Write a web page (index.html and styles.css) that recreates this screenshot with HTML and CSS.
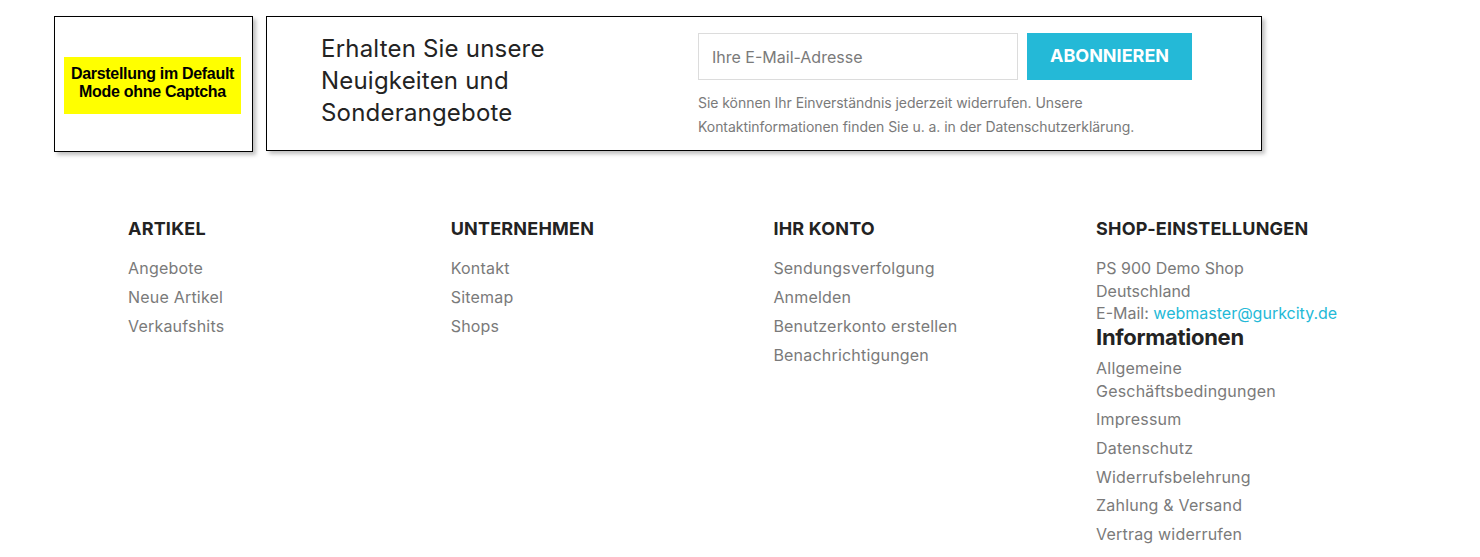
FILE: index.html
```html
<!DOCTYPE html>
<html lang="de">
<head>
<meta charset="utf-8">
<title>Footer</title>
<link rel="stylesheet" href="styles.css">
</head>
<body>
<div class="top-row">
  <div class="note-box">
    <div class="note">Darstellung im Default Mode ohne Captcha</div>
  </div>
  <div class="newsletter">
    <h2 class="nl-title">Erhalten Sie unsere Neuigkeiten und Sonderangebote</h2>
    <div class="nl-form">
      <div class="nl-row">
        <div class="nl-input">Ihre E-Mail-Adresse</div>
        <div class="nl-btn">ABONNIEREN</div>
      </div>
      <p class="nl-info">Sie können Ihr Einverständnis jederzeit widerrufen. Unsere Kontaktinformationen finden Sie u. a. in der Datenschutzerklärung.</p>
    </div>
  </div>
</div>

<div class="footer">
  <div class="col">
    <h3 class="col-title">ARTIKEL</h3>
    <ul class="links">
      <li>Angebote</li>
      <li>Neue Artikel</li>
      <li>Verkaufshits</li>
    </ul>
  </div>
  <div class="col">
    <h3 class="col-title">UNTERNEHMEN</h3>
    <ul class="links">
      <li>Kontakt</li>
      <li>Sitemap</li>
      <li>Shops</li>
    </ul>
  </div>
  <div class="col">
    <h3 class="col-title">IHR KONTO</h3>
    <ul class="links">
      <li>Sendungsverfolgung</li>
      <li>Anmelden</li>
      <li>Benutzerkonto erstellen</li>
      <li>Benachrichtigungen</li>
    </ul>
  </div>
  <div class="col col-shop">
    <h3 class="col-title">SHOP-EINSTELLUNGEN</h3>
    <div class="address">PS 900 Demo Shop<br>Deutschland<br>E-Mail: <span class="mail">webmaster@gurkcity.de</span></div>
    <h3 class="info-title">Informationen</h3>
    <ul class="links links-info">
      <li>Allgemeine Geschäftsbedingungen</li>
      <li>Impressum</li>
      <li>Datenschutz</li>
      <li>Widerrufsbelehrung</li>
      <li>Zahlung &amp; Versand</li>
      <li>Vertrag widerrufen</li>
    </ul>
  </div>
</div>
</body>
</html>
```

FILE: styles.css
```css
* { box-sizing: border-box; }
html, body { margin: 0; padding: 0; background: #fff; }
body { font-family: Inter, "Noto Sans", sans-serif; color: #232323; }

.top-row {
  display: flex;
  gap: 13px;
  padding: 16px 0 0 54px;
  align-items: flex-start;
}
.note-box {
  width: 199px;
  height: 136px;
  border: 1px solid #000;
  box-shadow: 3px 3px 4px rgba(0,0,0,0.25);
  padding: 40px 0 0 9px;
}
.note {
  width: 177px;
  height: 57px;
  background: #ffff00;
  font-family: "Liberation Sans", Arial, sans-serif;
  font-weight: bold;
  font-size: 16px;
  line-height: 18px;
  letter-spacing: -0.3px;
  color: #000;
  text-align: center;
  padding-top: 8px;
}
.newsletter {
  width: 996px;
  height: 135px;
  border: 1px solid #000;
  box-shadow: 3px 3px 4px rgba(0,0,0,0.25);
  display: flex;
  padding: 16px 0 0 54px;
}
.nl-title {
  margin: 0;
  width: 377px;
  padding-right: 40px;
  font-size: 24px;
  line-height: 32px;
  font-weight: 400;
  letter-spacing: 0.2px;
  color: #232323;
}
.nl-form { width: 500px; }
.nl-row { display: flex; gap: 9px; }
.nl-input {
  width: 320px;
  height: 47px;
  border: 1px solid #dcdcdc;
  font-size: 16px;
  color: #7a7a7a;
  padding: 13px 0 0 13px;
}
.nl-btn {
  width: 165px;
  height: 47px;
  background: #24b9d7;
  color: #fff;
  font-weight: 700;
  font-size: 18px;
  text-align: center;
  padding-top: 12px;
}
.nl-info {
  margin: 11px 0 0 0;
  font-size: 14px;
  line-height: 24px;
  color: #7a7a7a;
  letter-spacing: -0.05px;
  width: 480px;
}

.footer {
  display: grid;
  grid-template-columns: repeat(4, 322.7px);
  padding: 199px 0 0 128px;
  margin-top: -134px;
}
.col { width: 250px; }
.col-title {
  margin: 0 0 16px 0;
  font-size: 18px;
  line-height: 24px;
  font-weight: 700;
  color: #232323;
  letter-spacing: 0.2px;
}
.links {
  list-style: none;
  margin: 0;
  padding: 0;
}
.links li {
  font-size: 16px;
  line-height: 23px;
  margin-bottom: 6px;
  color: #7a7a7a;
  letter-spacing: 0.2px;
}
.links-info li { margin-bottom: 5.7px; }
.address {
  font-size: 16px;
  line-height: 22.5px;
  color: #7a7a7a;
  letter-spacing: 0;
}
.mail { color: #24b9d7; }
.info-title {
  margin: 0 0 8px 0;
  font-size: 22px;
  line-height: 24px;
  font-weight: 700;
  color: #232323;
  letter-spacing: -0.3px;
}
```
